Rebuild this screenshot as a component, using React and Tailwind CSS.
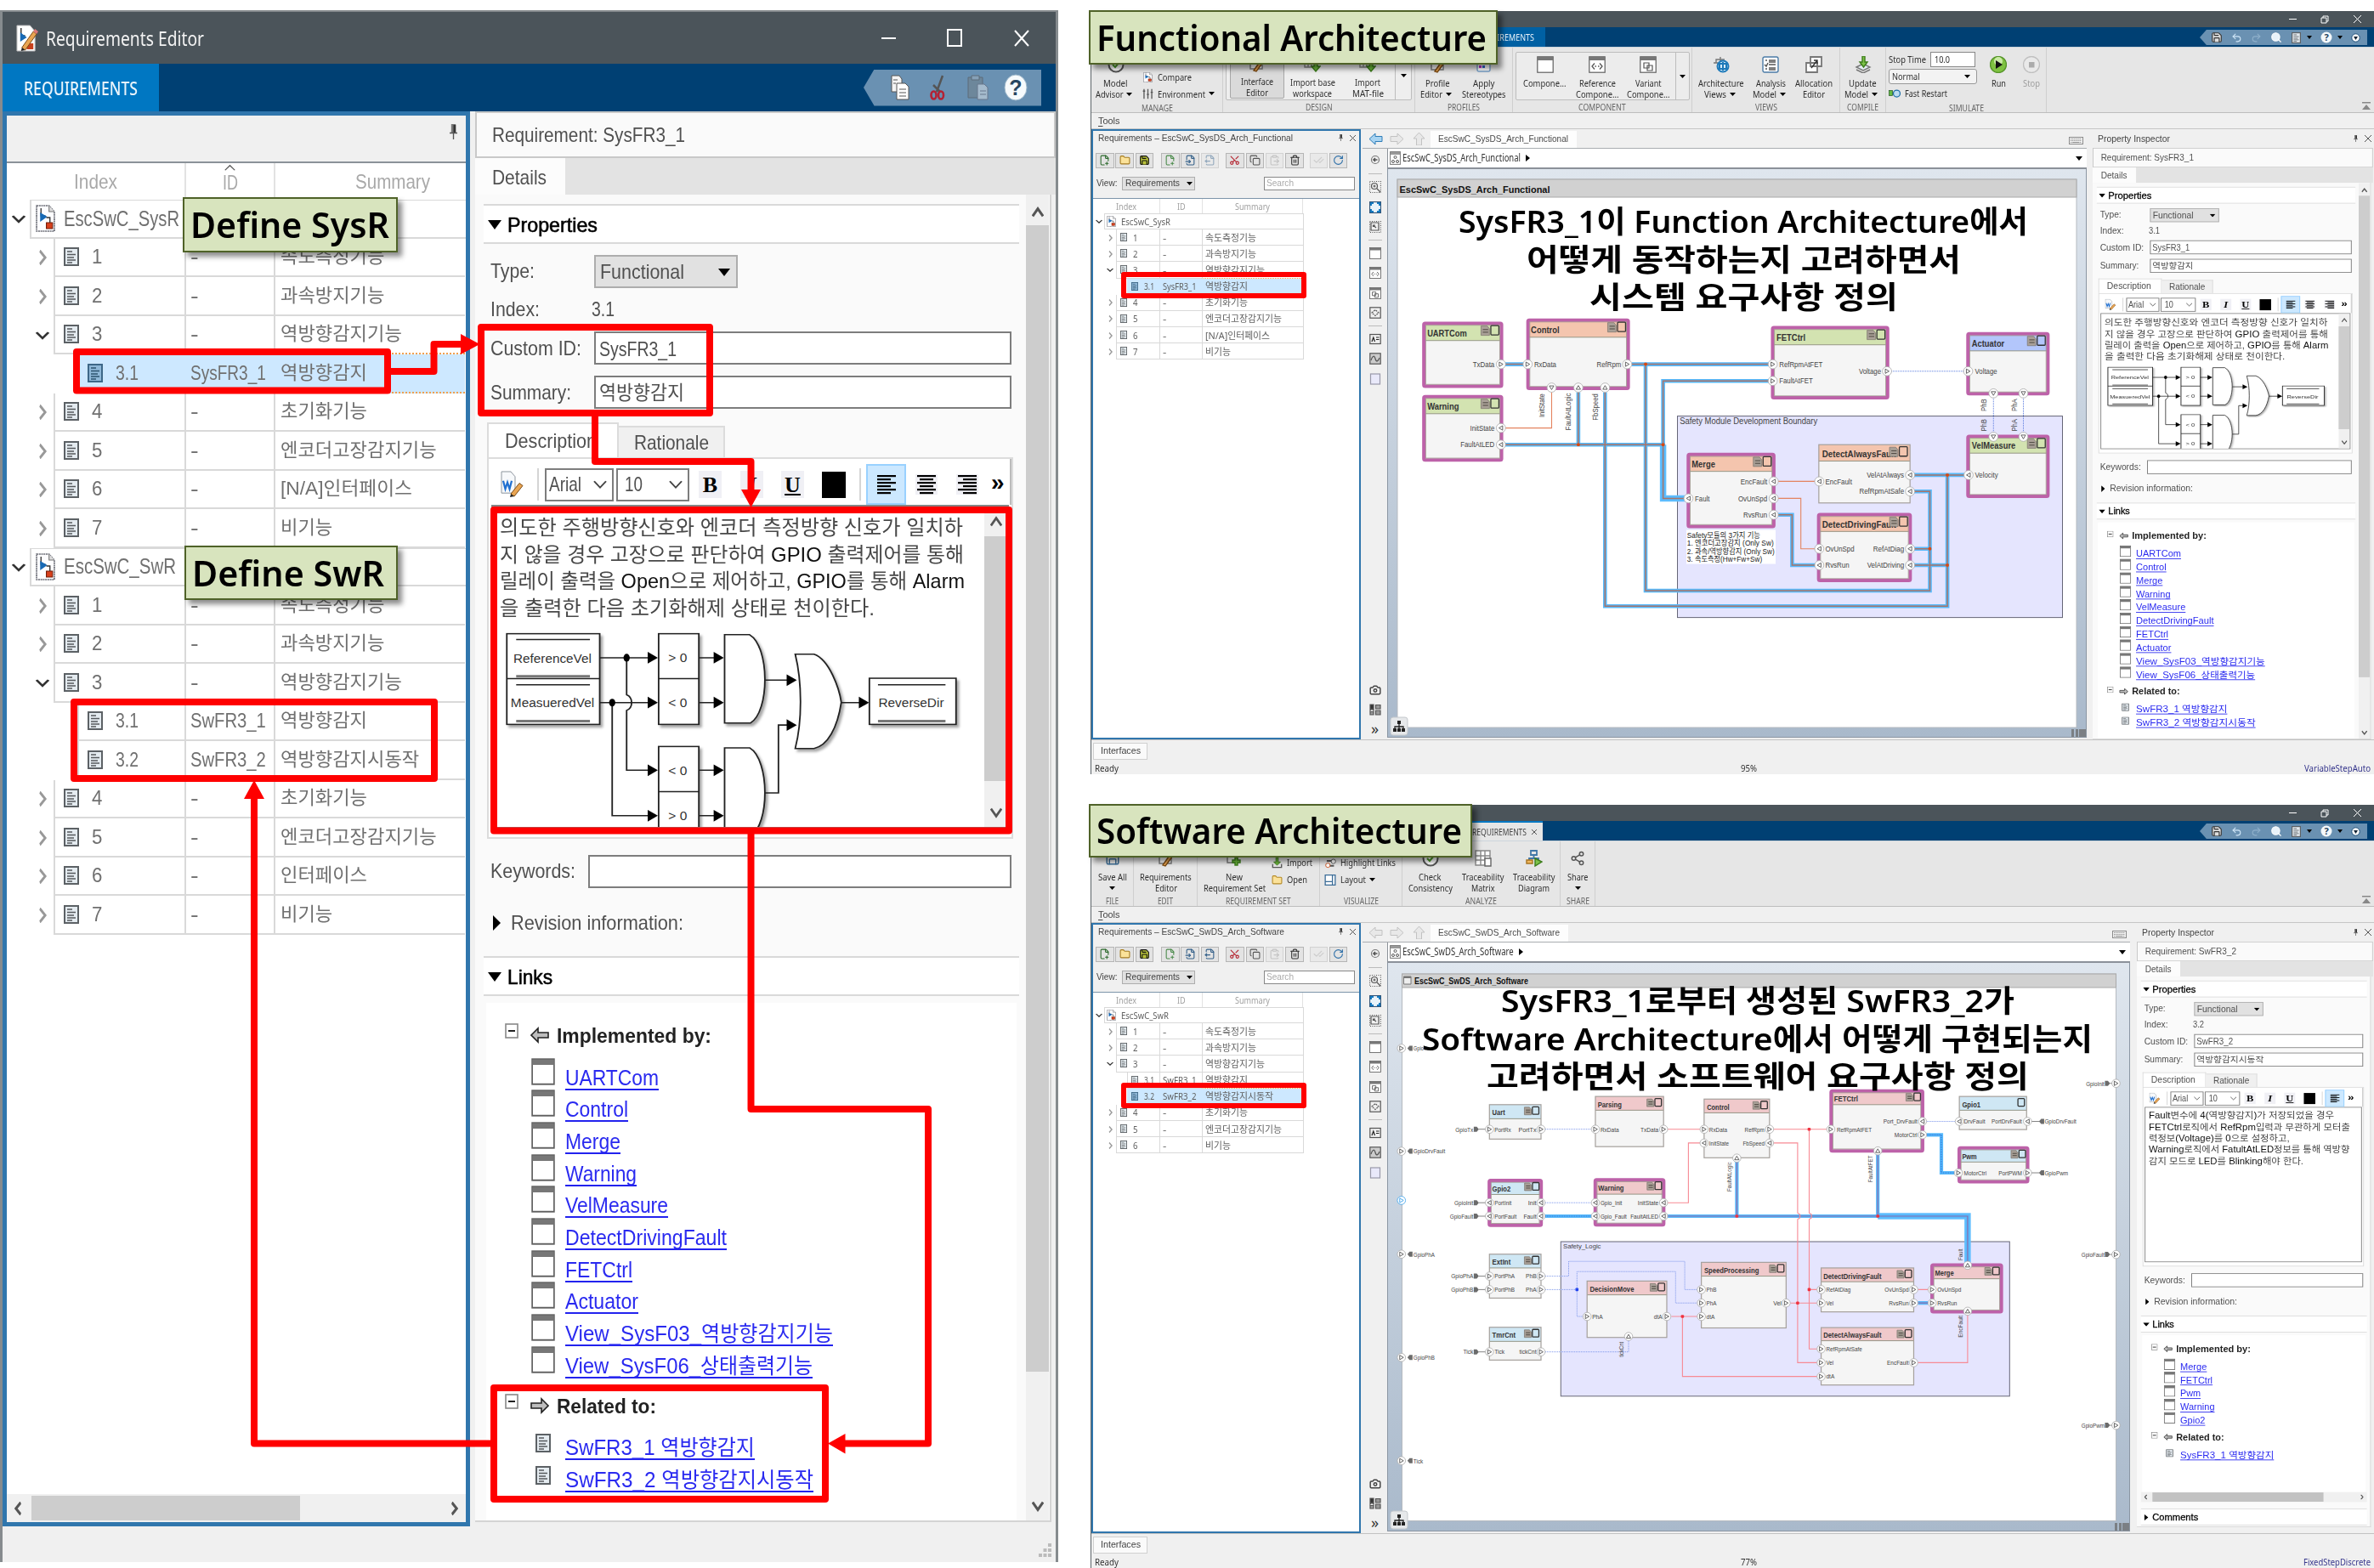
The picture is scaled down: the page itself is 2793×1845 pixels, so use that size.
import React, { useLayoutEffect, useRef, useState } from "react";
import {
  Search, Save, Undo2, Redo2, Scissors, Trash2, RotateCw, Share2, Camera, Copy,
  ClipboardPaste, FilePlus2, Folder, FileInput, FileOutput, CheckCheck,
} from "lucide-react";

const UI = "font-['Liberation_Sans','Noto_Sans_CJK_KR',sans-serif]";
const SEG = "font-['Noto_Sans','Noto_Sans_CJK_KR',sans-serif]";

/* Single line of text, condensed or widened to a given width. */
function T({ w, className = "", children }) {
  const ref = useRef(null);
  const [s, setS] = useState(1);
  useLayoutEffect(() => {
    if (w) setS(w / parseFloat(getComputedStyle(ref.current).width));
  }, [w]);
  return (
    <span className={"inline-block shrink-0 whitespace-pre leading-none " + className} style={{ width: w }}>
      <span ref={ref} className="inline-block origin-left leading-none" style={{ transform: `scaleX(${s})` }}>{children}</span>
    </span>
  );
}

/* ---------- small glyphs ---------- */
const Down = ({ className = "w-[14px] h-[9px]" }) => (
  <svg className={className + " shrink-0"} viewBox="0 0 14 9" preserveAspectRatio="none"><path d="M0 0H14L7 9Z" fill="#000" /></svg>
);
const RightTri = ({ className = "w-[9px] h-[18px]" }) => (
  <svg className={className + " shrink-0"} viewBox="0 0 9 18" preserveAspectRatio="none"><path d="M0 0L9 9L0 18Z" fill="#000" /></svg>
);
const Chev = ({ d = "down", className = "w-[16px] h-[10px]", color = "#555", sw = 2.4 }) => (
  <svg className={className + " shrink-0"} viewBox="0 0 16 16" preserveAspectRatio="none">
    <path d={{ down: "M1 3L8 13L15 3", up: "M1 13L8 3L15 13", right: "M3 1L13 8L3 15", left: "M13 1L3 8L13 15" }[d]} fill="none" stroke={color} strokeWidth={sw} />
  </svg>
);
const DocIcon = ({ className, sel }) => (
  <svg className={className + " shrink-0"} viewBox="0 0 18 22" preserveAspectRatio="none">
    <rect x="1" y="1" width="16" height="20" fill={sel ? "#8fb8d8" : "#e4ebf0"} stroke={sel ? "#3d6787" : "#5c6165"} strokeWidth="2" />
    <path d="M4 5H10M4 8.5H14M4 12H12M4 15H14M4 18H10" stroke={sel ? "#2d536f" : "#55595c"} strokeWidth="1.3" />
  </svg>
);
const SetIcon = ({ className }) => (
  <svg className={className + " shrink-0"} viewBox="0 0 22 32" preserveAspectRatio="none">
    <path d="M1 1H15L21 8V31H1Z" fill="#fdfdff" stroke="#6d6f78" strokeWidth="1.6" strokeDasharray="2 .6" />
    <path d="M15 1V8H21" fill="#ddd" stroke="#777" />
    <path d="M6 4V13H11" stroke="#444" fill="none" strokeWidth="1.4" />
    <path d="M5 9L13 14L5 20Z" fill="#1769b5" />
    <path d="M12 15H16V21" stroke="#333" fill="none" strokeWidth="1.3" />
    <rect x="12" y="21" width="7" height="7" fill="#d8401c" stroke="#701c08" />
  </svg>
);
const Pencil = () => (
  <g><path d="M7 28L21 9L25 12L11 31Z" fill="#e9a552" stroke="#7a4a14" strokeWidth="1" /><path d="M21 9L23 6L27 9L25 12Z" fill="#dd7777" /><path d="M7 28L6 32L11 31Z" fill="#222" /></g>
);
const EditorIcon = () => (
  <svg className="h-[34px] w-[26px] shrink-0" viewBox="0 0 27 34" preserveAspectRatio="none">
    <path d="M1 2H17L23 9V32H1Z" fill="#fff" stroke="#bbb" /><path d="M6 5V14H11" stroke="#333" fill="none" strokeWidth="1.5" />
    <path d="M5 10L13 16L5 21Z" fill="#1769b5" /><rect x="13" y="23" width="8" height="7" fill="#c8401c" /><Pencil />
  </svg>
);
const WordIcon = () => (
  <svg className="h-[32px] w-[27px] shrink-0" viewBox="0 0 27 33" preserveAspectRatio="none">
    <path d="M1 1H12L17 7V27H1Z" fill="#f7f9fb" stroke="#8c949c" />
    <path d="M3 12L5.500 22L8 14L10.500 22L13 12" stroke="#1f6fd0" strokeWidth="2.200" fill="none" />
    <path d="M12 28L22 15L26 18L16 31Z" fill="#e9a552" stroke="#7a4a14" /><path d="M12 28L11 32L16 31Z" fill="#222" />
  </svg>
);
const Pin = ({ className }) => (
  <svg className={className + " shrink-0"} viewBox="0 0 10 18" preserveAspectRatio="none">
    <rect x="2" y="0" width="6" height="10" fill="#777" /><rect x="5" y="1" width="3" height="9" fill="#333" /><path d="M0 10.500H10M5 10V18" stroke="#555" strokeWidth="1.500" />
  </svg>
);
const Box = ({ className = "w-[20px] h-[20px]", kind }) => (
  <svg className={className + " shrink-0"} viewBox="0 0 20 20" preserveAspectRatio="none">
    <rect x=".8" y=".8" width="18.400" height="18.400" fill="#fff" stroke="#5f5f5f" strokeWidth="1.200" />
    <rect x="1" y="1" width="18" height="4" fill="#777" />
    {kind === "ref" && <path d="M7 8.500L4 12L7 15.500M13 8.500L16 12L13 15.500M7.500 12H9M11 12H12.500" fill="none" stroke="#555" strokeWidth="1.300" />}
    {kind === "var" && <path d="M5 8H11V14H5ZM9 11H15V17H9Z" fill="#fff" stroke="#555" strokeWidth="1.200" />}
  </svg>
);
const Align = ({ k }) => {
  const w = [22, 16, 22, 16, 22, 16];
  return (
    <svg className={"h-[24px] w-[26px] shrink-0 " + (k === "l" ? "" : "bg-[#f0f0f5]")} viewBox="0 0 26 24">
      {w.map((n, i) => (
        <rect key={i} y={1 + i * 4} height="2.200" width={n} fill="#000" x={k === "l" ? 2 : k === "r" ? 24 - n : 13 - n / 2} />
      ))}
    </svg>
  );
};
const LinkArrow = ({ flip }) => (
  <svg className={"h-[20px] w-[22px] shrink-0 " + (flip ? "-scale-x-100" : "")} viewBox="0 0 22 20">
    <path d="M1 10L9 2V7H21V13H9V18Z" fill="#bdbdbd" stroke="#222" strokeWidth="1.600" />
  </svg>
);
const Minus = () => (
  <svg className="mb-[10px] h-[18px] w-[16px] shrink-0" viewBox="0 0 16 18"><rect x="1" y="1" width="14" height="16" fill="#fff" stroke="#888" strokeWidth="1.600" /><path d="M4 9H12" stroke="#222" strokeWidth="2" /></svg>
);

/* ---------- logic picture inside the description ---------- */
function GateDiagram() {
  const arrow = (x, y) => <path d={`M${x - 26} ${y - 18}L${x} ${y}L${x - 26} ${y + 18}Z`} fill="#000" />;
  const label = (x, y, w, t, fs = 38) => (
    <text x={x} y={y + 13} textAnchor="middle" textLength={w} lengthAdjust="spacingAndGlyphs" fontSize={fs} fill="#333">{t}</text>
  );
  const shadow = { filter: "drop-shadow(6px 8px 4px rgba(0,0,0,.35))" };
  return (
    <svg className={"mt-[6px] block h-[236px] w-[551px] " + UI} viewBox="110 410 1200 617" preserveAspectRatio="none">
      <g fill="#fff" stroke="#222" strokeWidth="4" style={shadow}>
        <rect x="128" y="430" width="238" height="279" />
        <rect x="517" y="430" width="103" height="279" />
        <rect x="517" y="777" width="103" height="279" />
        <path d="M686 433H750C802 470 802 670 752 705H686Z" />
        <path d="M686 781H750C802 818 802 1018 752 1053H686Z" />
        <path d="M867 493H915C955 510 980 600 985 641C975 720 950 775 915 783H867C885 700 885 580 867 493Z" />
        <rect x="1057" y="567" width="222" height="142" />
      </g>
      <path d="M128 568H366M517 568H620M517 916H620M152 448H341M152 587H341M1079 587H1252" stroke="#222" strokeWidth="4" fill="none" />
      <path d="M152 561H341M152 699H341M1079 699H1252" stroke="#777" strokeWidth="8" />
      <path d="M366 504H500M366 642H500M435 504V618C452 626 452 658 435 666V850H500M398 642V990H500M620 504H665M620 642H665M620 850H665M620 990H665M790 573H850M790 920H824V711H850M985 642H1035" stroke="#222" strokeWidth="4" fill="none" />
      {[[515, 504], [515, 642], [515, 850], [515, 990], [684, 504], [684, 642], [684, 850], [684, 990], [871, 573], [871, 711], [1056, 642]].map((p) => <g key={p.join()}>{arrow(p[0], p[1])}</g>)}
      <ellipse cx="435" cy="504" rx="8" ry="12" /><ellipse cx="398" cy="642" rx="8" ry="12" />
      {label(245, 506, 200, "ReferenceVel")}
      {label(245, 644, 214, "MeasueredVel")}
      {label(1164, 644, 168, "ReverseDir")}
      {label(566, 504, 48, "> 0")}{label(566, 642, 48, "< 0")}{label(566, 852, 48, "< 0")}{label(566, 990, 48, "> 0")}
    </svg>
  );
}

/* ---------- requirement inspector ---------- */
const Section = ({ w, children, open = true }) => (
  <div className="flex h-[47px] items-center border-y-2 border-[#d9d9d9] bg-white pt-[2px] pl-[5px]">
    {open ? <Down className="h-[11px] w-[16px]" /> : <RightTri className="mx-[3px] h-[18px] w-[10px]" />}
    <T w={w} className="ml-[7px] text-[24px] text-black [-webkit-text-stroke:.6px_black]">{children}</T>
  </div>
);
const Field = ({ h, label, lw, children }) => (
  <div className={"flex items-center pr-[9px] pl-[8px] " + h}>
    <div className="flex w-[122px] shrink-0"><T w={lw}>{label}</T></div>
    {children}
  </div>
);
const Input = ({ children }) => <div className="flex h-[39px] flex-1 items-center border-2 border-[#7d7d7d] bg-white pt-[2px] pl-[4px]">{children}</div>;
const Mark = ({ children, bg = true }) => (
  <div className={"flex h-[32px] w-[27px] shrink-0 items-center justify-center text-[26px] font-bold text-black font-['Liberation_Serif',serif] " + (bg ? "bg-[#f0f0f5]" : "")}>{children}</div>
);
const Combo = ({ cls, children }) => (
  <div className={"flex h-[39px] shrink-0 items-center border-2 border-[#7d7d7d] bg-white pr-[6px] " + cls}>
    {children}<span className="flex-1" /><Chev className="h-[12px] w-[16px]" color="#444" sw={2} />
  </div>
);
const K = ({ children }) => <span className="text-[#111]">{children}</span>;

function Links({ title, w, items, doc, flip, top }) {
  return (
    <>
      <div className={"flex h-[38px] items-center pl-[25px] " + top}>
        <Minus /><span className="w-[14px]" /><LinkArrow flip={flip} />
        <T w={w} className="mt-[2px] ml-[9px] text-[24px] font-bold text-[#222]">{title}</T>
      </div>
      <div className="mt-[11px]">
        {items.map(([t, tw]) => (
          <div key={t} className="flex h-[37.66px] items-center pl-[56px]">
            <div className="flex w-[40px] items-center">{doc ? <DocIcon className="mb-[8px] ml-[5px] h-[22px] w-[18px]" /> : <Box className="mb-[12px] h-[32px] w-[28px]" />}</div>
            <T w={tw} className="mt-[5px] border-b-2 border-[#2222ee] text-[25px] text-[#2a2af0]">{t}</T>
          </div>
        ))}
      </div>
    </>
  );
}

function Inspector({ name, nameW, index, idText, idW, sum, sumW, narrow, lines, impl, rel, relFlip }) {
  return (
    <div className={"flex h-full w-full flex-col bg-[#f0f0f0] text-[24px] text-[#505050] " + UI}>
      <div className="flex h-[55px] items-center border-2 border-[#c9c9c9] bg-[#fafafa] pl-[18px]"><T w={nameW}>{name}</T></div>
      <div className="flex h-[43px] bg-[#e3e3e3]">
        <div className="flex w-[106px] items-center bg-[#fcfcfc] pt-[2px] pl-[20px]"><T w={64}>Details</T></div>
      </div>
      <div className="mr-[5px] flex min-h-0 flex-1 overflow-hidden border-r-2 border-b-2 border-[#d4d4d4] bg-[#fafafa]">
        <div className={"flex min-w-0 flex-1 flex-col pt-[11px] pl-[10px] " + (narrow ? "pr-[8px]" : "")}>
          <Section w={106}>Properties</Section>
          <Field h="h-[64px]" label="Type:" lw={52}>
            <div className="flex h-[39px] w-[169px] items-center border-2 border-[#adadad] bg-[#e1e1e1] pt-[2px] pl-[5px]"><T w={99}>Functional</T><span className="w-[40px]" /><Down /></div>
          </Field>
          <Field h="h-[26px]" label="Index:" lw={58}><T w={27} className="-ml-[3px]">{index}</T></Field>
          <Field h="h-[65px]" label="Custom ID:" lw={107}><Input><T w={idW}>{idText}</T></Input></Field>
          <Field h="h-[39px]" label="Summary:" lw={95}><Input><T w={sumW} className="text-[23px]">{sum}</T></Input></Field>
          <div className="mt-[16px] flex h-[41px] items-end pl-[4px]">
            <div className="flex h-[41px] w-[155px] items-center border-2 border-b-0 border-[#dcdcdc] bg-white pl-[19px]"><T w={108}>Description</T></div>
            <div className="flex h-[37px] w-[125px] items-center border-2 border-b-0 border-l-0 border-[#dcdcdc] bg-[#f0f0f0] pl-[18px]"><T w={88}>Rationale</T></div>
          </div>
          <div className="mr-[7px] ml-[4px] overflow-hidden border-2 border-[#dcdcdc] bg-white">
            <div className="flex h-[54px] items-center overflow-hidden border-r-2 border-[#bbb] pt-[6px] pl-[14px]">
              <WordIcon />
              <span className="mr-[7px] ml-[16px] h-[38px] w-[2px] shrink-0 bg-[#d5d5d5]" />
              <Combo cls="w-[81px] pl-[3px]"><T w={38}>Arial</T></Combo>
              <Combo cls="ml-[3px] w-[86px] pl-[8px]"><T w={21}>10</T></Combo>
              <span className="w-[11px] shrink-0" /><Mark>B</Mark>
              <span className="w-[22px] shrink-0" /><Mark><i>I</i></Mark>
              <span className="w-[21px] shrink-0" /><Mark><span className="underline">U</span></Mark>
              <span className="ml-[21px] h-[31px] w-[28px] shrink-0 bg-black" />
              <span className="mr-[6px] ml-[16px] h-[38px] w-[2px] shrink-0 bg-[#d5d5d5]" />
              <span className="flex h-[48px] w-[47px] shrink-0 items-center justify-center border-2 border-[#99d1ff] bg-[#cce8ff]"><Align k="l" /></span>
              {!narrow && <><span className="w-[11px] shrink-0" /><Align k="c" /><span className="w-[22px] shrink-0" /><Align k="r" /></>}
              <span className={"shrink-0 " + (narrow ? "w-[8px]" : "w-[15px]")} /><T className="pb-[4px] text-[28px] font-bold text-black">»</T>
            </div>
            <div className={"mx-[3px] mb-[10px] flex overflow-hidden border-2 border-[#868686] " + (narrow ? "h-[435px]" : "h-[381px]")}>
              <div className={"min-w-0 flex-1 overflow-hidden pl-[8px] " + (narrow ? "pt-[7px]" : "pt-[9px]")}>
                {lines.map(([t, lw], i) => (
                  <div key={i} className="flex h-[31.7px] items-center text-[24px] text-[#484848]"><T w={lw}>{t}</T></div>
                ))}
                {!narrow && <GateDiagram />}
              </div>
              {!narrow && (
                <div className="flex w-[27px] shrink-0 flex-col items-center bg-[#f0f0f0] py-[10px]">
                  <Chev d="up" className="mt-[1px] h-[14px] w-[14px]" sw={3} />
                  <span className="mt-[10px] h-[288px] w-full bg-[#cdcdcd]" />
                  <span className="flex-1" /><Chev className="h-[14px] w-[14px]" sw={3} />
                </div>
              )}
            </div>
          </div>
          <div className="flex h-[76px] shrink-0 items-center pr-[9px] pl-[8px]"><T w={100}>Keywords:</T><span className="w-[15px]" /><Input /></div>
          <div className="mb-[16px] flex h-[46px] shrink-0 items-center pl-[11px]"><RightTri /><T w={203} className="ml-[12px]">Revision information:</T></div>
          <div className="shrink-0"><Section w={53}>Links</Section></div>
          <div className="mx-[3px] mt-[8px] min-h-0 flex-1 bg-white">
            <div className="-ml-[3px]">
              <Links title="Implemented by:" w={182} items={impl} top="pt-0 mt-[19px]" />
              <Links title="Related to:" w={117} items={rel} doc flip={relFlip} top="mt-[10px]" />
            </div>
          </div>
          {narrow && (
            <div className="shrink-0 pb-[3px]">
              <div className="flex h-[28px] items-center justify-between bg-[#f0f0f0] px-[8px]">
                <Chev d="left" className="h-[14px] w-[8px]" sw={4} />
                <span className="mr-auto ml-[12px] h-[26px] w-[418px] bg-[#c2c2c2]" />
                <Chev d="right" className="h-[14px] w-[8px]" sw={4} />
              </div>
              <div className="mt-[18px]"><Section w={112} open={false}>Comments</Section></div>
            </div>
          )}
        </div>
        {!narrow && (
          <div className="mr-[1px] ml-[8px] flex w-[27px] shrink-0 flex-col items-center bg-[#f0f0f0]">
            <Chev d="up" className="mt-[14px] h-[14px] w-[14px]" sw={3.500} />
            <span className="mt-[8px] h-[1349px] w-full bg-[#cdcdcd]" />
            <span className="flex-1" /><Chev className="mb-[10px] h-[14px] w-[14px]" sw={3.500} />
          </div>
        )}
      </div>
    </div>
  );
}

const SYS = {
  name: "Requirement: SysFR3_1", nameW: 227, index: "3.1", idText: "SysFR3_1", idW: 91, sum: "역방향감지", sumW: 100, relFlip: true,
  lines: [
    ["의도한 주행방향신호와 엔코더 측정방향 신호가 일치하", 545],
    [<>지 않을 경우 고장으로 판단하여 <K>GPIO</K> 출력제어를 통해</>, 546],
    [<>릴레이 출력을 <K>Open</K>으로 제어하고, <K>GPIO</K>를 통해 <K>Alarm</K></>, 547],
    ["을 출력한 다음 초기화해제 상태로 천이한다.", 441],
  ],
  impl: [["UARTCom", 110], ["Control", 74], ["Merge", 65], ["Warning", 84], ["VelMeasure", 121], ["DetectDrivingFault", 190], ["FETCtrl", 79], ["Actuator", 86], ["View_SysF03_역방향감지기능", 315], ["View_SysF06_상태출력기능", 291]],
  rel: [["SwFR3_1 역방향감지", 223], ["SwFR3_2 역방향감지시동작", 292]],
};
const SW = {
  name: "Requirement: SwFR3_2", nameW: 223, index: "3.2", idText: "SwFR3_2", idW: 89, sum: "역방향감지시동작", sumW: 164, relFlip: false, narrow: true,
  lines: [
    [<><K>Fault</K>변수에 <K>4(</K>역방향감지<K>)</K>가 저장되었을 경우</>, 453],
    [<><K>FETCtrl</K>로직에서 <K>RefRpm</K>입력과 무관하게 모터출</>, 492],
    [<>력정보<K>(Voltage)</K>를 <K>0</K>으로 설정하고,</>, 344],
    [<><K>Warning</K>로직에서 <K>FatultAtLED</K>정보를 통해 역방향</>, 491],
    [<>감지 모드로 <K>LED</K>를 <K>Blinking</K>해야 한다.</>, 378],
  ],
  impl: [["Merge", 65], ["FETCtrl", 79], ["Pwm", 50], ["Warning", 84], ["Gpio2", 61]],
  rel: [["SysFR3_1 역방향감지", 229]],
};

/* ---------- requirement tree ---------- */
const row = (lv, num, id, sum, n, open, sel) => ({ lv, num, id, sum, n, open, sel });
const common = (tail6) => [row(1, "4", "-", "초기화기능", 5), row(1, "5", "-", "엔코더고장감지기능", 9), ...tail6];
const head3 = [row(1, "1", "-", "속도측정기능", 6), row(1, "2", "-", "과속방지기능", 6), row(1, "3", "-", "역방향감지기능", 7, true)];
const na = row(1, "6", "-", "[N/A]인터페이스", 7.600);
const sysRows = [...head3, row(2, "3.1", "SysFR3_1", "역방향감지", 5, false, true), ...common([na, row(1, "7", "-", "비기능", 3)])];
const swRows = (sel, tail) => [...head3, row(2, "3.1", "SwFR3_1", "역방향감지", 5), row(2, "3.2", "SwFR3_2", "역방향감지시동작", 8, false, sel), ...common(tail)];
const swRowsBig = swRows(false, [row(1, "6", "-", "인터페이스", 5), row(1, "7", "-", "비기능", 3)]);
const swRowsSmall = swRows(true, [row(1, "6", "-", "비기능", 3)]);

const BIG = {
  font: "text-[22px] text-[#707070] " + UI, row: "h-[45.5px]", gut: ["w-[27px]", "w-[55px]", "w-[83px]"], c1: ["w-[182px]", "w-[154px]", "w-[126px]"],
  chev: "w-[27px]", cr: "h-[18px] w-[10px]", cd: "h-[11px] w-[16px]", bw: "border-b-2", bl: "border-l-2", icon: "ml-[10px] h-[22px] w-[18px]",
  num: "ml-[15px] text-[24px]", c2: "w-[105px] pl-[5px]", c3: "w-[225px] pl-[6px]", unit: 20.400, k: 2.250, root: "ml-[5px] h-[32px] w-[23px]", rootT: "ml-[10px] text-[25px]", idc: "text-[24px]",
  selB: "border-b-[2px] border-b-[#f0a050] border-dotted",
};
const SMALL = {
  font: "text-[11px] text-[#606060] " + SEG, row: "h-[19.150px]", gut: ["w-[13px]", "w-[27px]", "w-[40px]"], c1: ["w-[65px]", "w-[51px]", "w-[38px]"],
  chev: "w-[13px]", cr: "h-[8px] w-[5px]", cd: "h-[5px] w-[8px]", bw: "border-b", bl: "border-l", icon: "ml-[4px] h-[10px] w-[8px]",
  num: "ml-[7px]", c2: "w-[50px] pl-[3px]", c3: "w-[119px] pl-[3px]", unit: 10, k: 1, root: "ml-[2px] h-[13px] w-[11px]", rootT: "ml-[6px]", idc: "",
  selB: "border-b border-b-[#f0a050] border-dotted",
};
const LINE = "border-[#d9d9d9]";

function TreeRoot({ c, name, w }) {
  return (
    <div className={"flex " + c.row}>
      <div className={"flex items-center justify-center " + c.gut[0]}><Chev className={c.cd} color="#333" sw={3} /></div>
      <div className={`flex flex-1 items-center border-t ${LINE} ${c.bw} ${c.bl}`}><SetIcon className={c.root} /><T w={w} className={c.rootT}>{name}</T></div>
    </div>
  );
}
function TreeRow({ c, r, beforeSel }) {
  const cell = r.sel ? `border-l-[#cde8ff] bg-[#cde8ff] ${c.selB}` : beforeSel ? `${LINE} ${c.bw}` : `${LINE} ${c.bw}`;
  const last = beforeSel ? `border-l-[#d9d9d9] ${c.selB} [border-left-style:solid]` : cell;
  return (
    <div className={"flex " + c.row}>
      <div className={"flex justify-end " + c.gut[r.lv]}>
        {r.lv === 1 && <div className={"flex items-center justify-center " + c.chev}>{r.open ? <Chev className={c.cd} color="#333" sw={3} /> : <Chev d="right" className={c.cr} color="#999" sw={3.500} />}</div>}
      </div>
      <div className={`flex items-center ${c.bl} ${c.c1[r.lv]} ${cell}`}><DocIcon sel={r.sel} className={c.icon} /><T w={(r.num.length > 1 ? 12 : 5.500) * c.k} className={c.num}>{r.num}</T></div>
      <div className={`flex items-center ${c.bl} ${c.c2} ${cell}`}><T w={r.id === "-" ? 4.300 * c.k : 39.500 * c.k} className={c.idc}>{r.id}</T></div>
      <div className={`flex items-center ${c.bl} ${c.c3} ${last}`}><T w={r.n * c.unit}>{r.sum}</T></div>
    </div>
  );
}
const TreeRows = ({ c, rows }) => rows.map((r, i) => <TreeRow key={i} c={c} r={r} beforeSel={Boolean(rows[i + 1] && rows[i + 1].sel)} />);

/* ---------- requirements editor window ---------- */
function EditorWindow() {
  return (
    <div className="mt-[12px] flex h-[1826px] w-[1245px] shrink-0 flex-col bg-[#868b8e] px-[3px] pt-[2px]">
      <div className={"flex h-[61px] items-center bg-[#4b545a] pl-[16px] " + SEG}>
        <EditorIcon />
        <T w={186} className="ml-[9px] text-[24px] text-[#f2f2f2]">Requirements Editor</T>
        <span className="flex-1" />
        <span className="h-[2px] w-[17px] bg-white" />
        <span className="ml-[60px] h-[21px] w-[18px] border-2 border-white" />
        <svg className="mr-[31px] ml-[61px] h-[20px] w-[18px]" viewBox="0 0 18 20"><path d="M1 1L17 19M17 1L1 19" stroke="#fff" strokeWidth="2" /></svg>
      </div>
      <div className="flex h-[56px] items-center bg-[#004073] pr-[17px]">
        <div className={"flex h-full w-[184px] items-center bg-[#0077c2] pl-[25px] " + SEG}><T w={134} className="text-[22px] font-medium text-[#e8f3fb]">REQUIREMENTS</T></div>
        <span className="flex-1" />
        <div className="flex h-[43px] w-[209px] items-center bg-[#6a91b2] pl-[32px] [clip-path:polygon(6%_0,100%_0,100%_100%,6%_100%,0_50%)]">
          <svg className="h-[30px] w-[22px]" viewBox="0 0 22 30"><path d="M1 1H10L13 5V20H1Z" fill="#f4f4f4" stroke="#555" /><path d="M7 10H17L21 14V29H7Z" fill="#fff" stroke="#555" /><path d="M10 17H18M10 21H18M10 25H18M3 6H8M3 10H6" stroke="#555" /></svg>
          <svg className="ml-[24px] h-[30px] w-[18px]" viewBox="0 0 18 30"><path d="M15 1L8 20M4 12L12 20" stroke="#555" strokeWidth="2.500" /><g fill="none" stroke="#b32234" strokeWidth="2.600"><ellipse cx="4.500" cy="24" rx="3" ry="4.500" /><ellipse cx="13" cy="24" rx="3" ry="4.500" /></g></svg>
          <svg className="ml-[26px] h-[32px] w-[26px] opacity-60" viewBox="0 0 26 32"><path d="M1 4H18V28H1Z" fill="#70808c" stroke="#555" /><path d="M5 2H14V7H5Z" fill="#9ab" stroke="#555" /><path d="M12 12H20L24 16V30H12Z" fill="#cdd7df" stroke="#667" /><path d="M15 20H22M15 24H22" stroke="#667" /></svg>
          <svg className="ml-[17px] h-[32px] w-[28px]" viewBox="0 0 28 32"><ellipse cx="14" cy="16" rx="13" ry="15" fill="#f6fafc" stroke="#9db7ca" /><text x="14" y="25" textAnchor="middle" fontSize="25" fontWeight="bold" fill="#27455f" fontFamily="Liberation Sans">?</text></svg>
        </div>
      </div>
      <div className="flex h-[1665px] bg-[#f0f0f0]">
        <div className={"flex w-[550px] flex-col overflow-hidden border-[5px] border-[#3076ad] bg-white " + UI}>
          <div className="flex h-[56px] shrink-0 justify-end border-b-2 border-[#8b9299] bg-[#f0f0f0] pt-[10px] pr-[10px]"><Pin className="h-[18px] w-[9px]" /></div>
          <div className="flex h-[43px] shrink-0 text-[24px] text-[#a9a9a9]">
            <div className="flex w-[209px] shrink-0 items-center justify-center"><T w={51}>Index</T></div>
            <div className="flex w-[105px] shrink-0 flex-col items-center border-l-2 border-[#e2e2e2]"><Chev d="up" className="mt-[1px] h-[9px] w-[13px]" sw={1.800} /><T w={18} className="mt-[1px]">ID</T></div>
            <div className="flex w-[278px] shrink-0 items-center justify-center border-l-2 border-[#e2e2e2]"><T w={88}>Summary</T></div>
          </div>
          <div className={BIG.font}>
            <TreeRoot c={BIG} name="EscSwC_SysR" w={136} />
            <TreeRows c={BIG} rows={sysRows} />
            <TreeRoot c={BIG} name="EscSwC_SwR" w={132} />
            <TreeRows c={BIG} rows={swRowsBig} />
          </div>
          <div className="mt-auto flex h-[33px] items-center justify-between bg-[#f0f0f0] px-[9px]">
            <Chev d="left" className="h-[16px] w-[9px]" sw={4} /><span className="mr-auto ml-[11px] h-[29px] w-[316px] bg-[#cdcdcd]" /><Chev d="right" className="h-[16px] w-[9px]" sw={4} />
          </div>
        </div>
        <div className="ml-[6px] h-[1660px] w-[683px]"><Inspector {...SYS} /></div>
      </div>
      <div className="flex h-[42px] items-end justify-end bg-[#f0f0f0] pr-[5px] pb-[5px]">
        <svg className="h-[17px] w-[15px]" viewBox="0 0 15 17" fill="#bbb"><path d="M11 0h4v4h-4zM11 6h4v4h-4zM11 12h4v4h-4zM5.500 6h4v4h-4zM5.500 12h4v4h-4zM0 12h4v4h-4z" /></svg>
      </div>
    </div>
  );
}

/* ---------- ribbon ---------- */
const RT = "text-[11.5px] text-[#2e2e2e]";
const Dn = () => <Down className="mx-[4px] h-[4px] w-[7px]" />;
const Group = ({ w, title, tw, children }) => (
  <div className={"flex shrink-0 flex-col border-r border-[#cfcfcf] " + w}>
    <div className="flex h-[64px]">{children}</div>
    <div className="flex h-[13px] items-center justify-center text-[11px] text-[#666]"><T w={tw}>{title}</T></div>
  </div>
);
const Btn = ({ w, icon, a, aw, b, bw, dd, top = "pt-[8px]", cls = "" }) => (
  <div className={`flex shrink-0 flex-col items-center ${w} ${top} ${cls}`}>
    <div className="mb-[3px] flex h-[24px] items-center">{icon}</div>
    <div className={"flex h-[13px] items-center " + RT}><T w={aw}>{a}</T></div>
    <div className={"flex h-[13px] items-center " + RT}>{b && <T w={bw}>{b}</T>}{dd && <Dn />}</div>
  </div>
);
const Line = ({ icon, t, w, dd }) => (
  <div className={"flex h-[20px] items-center gap-[5px] " + RT}><span className="flex w-[14px] shrink-0 justify-center">{icon}</span><span className="flex items-center"><T w={w}>{t}</T>{dd && <Dn />}</span></div>
);
const Svg = ({ children, vb = "0 0 20 20", c = "h-[20px] w-[20px]" }) => <svg className={c + " shrink-0"} viewBox={vb} fill="none" strokeWidth="1.400">{children}</svg>;
const CheckI = () => <Svg><circle cx="10" cy="10" r="8.500" fill="#fff" stroke="#555" strokeWidth="2" /><path d="M6 10L9 13L14 7" stroke="#4c9a2a" strokeWidth="2" /></Svg>;
const GridDown = () => <Svg><path d="M1 2H13V14H1ZM1 6H13M1 10H13M5 2V14M9 2V14" stroke="#888" /><path d="M12 8H16V13H19L14 19L9 13H12Z" fill="#6dbb3c" stroke="#3d7d1c" /></Svg>;
const PencilI = () => <Svg><path d="M2 3H16V16H2Z" fill="#f5f5f5" stroke="#777" /><path d="M6 18L15 5L18 7L9 19Z" fill="#e9a552" stroke="#7a4a14" /></Svg>;
const PlusBox = () => <Svg><path d="M2 3H14V15H2Z" fill="#f5f5f5" stroke="#777" /><path d="M11 9H14V12H17V15H14V18H11V15H8V12H11Z" fill="#6dbb3c" stroke="#3d7d1c" /></Svg>;

const FunctionalRibbon = () => (
  <>
    <Group w="w-[155px]" title="MANAGE" tw={37}>
      <Btn w="w-[57px]" icon={<CheckI />} a="Model" aw={28.600} b="Advisor" bw={32.600} dd />
      <div className="flex flex-col pt-[25px] pl-[2px]">
        <Line icon={<SetIcon className="h-[12px] w-[11px]" />} t="Compare" w={40} />
        <Line icon={<Svg c="h-[13px] w-[13px]"><path d="M3 1V19M10 1V19M17 1V19M1 5H5M8 11H12M15 7H19" stroke="#555" strokeWidth="2" /></Svg>} t="Environment" w={56} dd />
      </div>
    </Group>
    <Group w="w-[226px]" title="DESIGN" tw={31.600}>
      <div className="mt-[4px] ml-[3px] flex h-[58px] w-[219px] rounded-[2px] border border-[#bdbdbd] bg-[#eeeeee]">
        <Btn w="w-[64px]" top="pt-[1px]" cls="ml-[4px] rounded-[2px] border border-[#a8a8a8] bg-[#dadada] h-[55px]" icon={<PencilI />} a="Interface" aw={38} b="Editor" bw={26} />
        <Btn w="w-[66px]" top="pt-[2px]" icon={<GridDown />} a="Import base" aw={53} b="workspace" bw={46} />
        <Btn w="w-[64px]" top="pt-[2px]" icon={<GridDown />} a="Import" aw={30} b="MAT-file" bw={37} />
        <div className="flex flex-1 items-center justify-center border-l border-[#bdbdbd]"><Dn /></div>
      </div>
    </Group>
    <Group w="w-[115px]" title="PROFILES" tw={38}>
      <Btn w="w-[53px]" icon={<PencilI />} a="Profile" aw={28.600} b="Editor" bw={26} dd />
      <Btn w="w-[56px]" icon={<Svg><rect x="2" y="1" width="15" height="17" rx="2" fill="#fff" stroke="#78a0c8" /><g fill="#c33"><rect x="4" y="7" width="3" height="3" /><rect x="8" y="11" width="3" height="3" fill="#36c" /><rect x="12" y="7" width="3" height="3" fill="#93c" /><rect x="8" y="7" width="3" height="3" fill="#e7a" /><rect x="4" y="11" width="3" height="3" fill="#b3c" /></g></Svg>} a="Apply" aw={25.500} b="Stereotypes" bw={51.500} />
    </Group>
    <Group w="w-[211px]" title="COMPONENT" tw={55.600}>
      <div className="mt-[5px] ml-[3px] flex h-[57px] w-[205px] rounded-[2px] border border-[#bdbdbd] bg-[#ececec]">
        <Btn w="w-[67px]" top="pt-[2px]" icon={<Box />} a="Compone..." aw={50.500} />
        <Btn w="w-[56px]" top="pt-[2px]" icon={<Box kind="ref" />} a="Reference" aw={43} b="Compone..." bw={50.500} />
        <Btn w="w-[64px]" top="pt-[2px]" icon={<Box kind="var" />} a="Variant" aw={30.600} b="Compone..." bw={50.500} />
        <div className="flex flex-1 items-center justify-center border-l border-[#bdbdbd]"><Dn /></div>
      </div>
    </Group>
    <Group w="w-[174px]" title="VIEWS" tw={26}>
      <Btn w="w-[68px]" icon={<Svg><path d="M4 8V4H14M9 1V6M1 8H6" stroke="#777" /><circle cx="12" cy="12" r="6.500" fill="#d6ecfa" stroke="#1d79b9" strokeWidth="2" /><path d="M8 9H16V15H8ZM12 7V17" stroke="#1d79b9" strokeWidth="2" /></Svg>} a="Architecture" aw={53.600} b="Views" bw={26} dd />
      <Btn w="w-[48px]" icon={<Svg><rect x="1" y="1" width="18" height="18" rx="2" fill="#fff" stroke="#4b7ba6" /><path d="M4 5H6M8 5H16M8 7H16M3 10L5 12L7 8M8 10H16M4 15H6M8 14H16M8 16H16" stroke="#555" /></Svg>} a="Analysis" aw={35} b="Model" bw={28} dd />
      <Btn w="w-[54px]" icon={<Svg><path d="M6 1H19V12H6ZM1 8H14V19H1Z" fill="#fff" stroke="#777" strokeWidth="1.800" /><path d="M7 14L14 5M10 5H14V9" stroke="#333" /></Svg>} a="Allocation" aw={44} b="Editor" bw={26} />
    </Group>
    <Group w="w-[54px]" title="COMPILE" tw={37}>
      <Btn w="w-[53px]" icon={<Svg><path d="M2 13L10 9L18 13L10 17Z" fill="#e6eef4" stroke="#777" /><path d="M2 16L10 20L18 16" stroke="#777" /><path d="M9 0H12V7H15L10.500 13L6 7H9Z" fill="#7ec24a" stroke="#3d7d1c" /></Svg>} a="Update" aw={32.700} b="Model" bw={28} dd />
    </Group>
    <Group w="w-[189px]" title="SIMULATE" tw={41}>
      <div className="flex w-[107px] flex-col gap-[2px] pt-[5px] pl-[3px]">
        <div className={"flex h-[18px] items-center " + RT}><T w={44}>Stop Time</T><div className="ml-[5px] flex h-[18px] w-[53px] items-center border border-[#888] bg-white pl-[4px]"><T w={18}>10.0</T></div></div>
        <div className={"flex h-[18px] w-[104px] items-center justify-between rounded-[3px] border border-[#999] bg-[#f3f3f3] px-[3px] " + RT}><T w={32.600}>Normal</T><Dn /></div>
        <div className="-mt-[1px]"><Line icon={<Svg c="h-[10px] w-[14px]" vb="0 0 28 20"><rect x="1" y="3" width="8" height="12" fill="#6b4" stroke="#252" /><circle cx="19" cy="10" r="8" fill="#bcdcf2" stroke="#1d6ea8" strokeWidth="2.500" /></Svg>} t="Fast Restart" w={50} /></div>
      </div>
      <Btn w="w-[50px]" icon={<Svg><circle cx="10" cy="10" r="9.500" fill="#7fc241" stroke="#56952a" /><circle cx="10" cy="6" r="5" fill="#c9eaa5" /><path d="M7 5L15 10L7 15Z" fill="#111" /></Svg>} a="Run" aw={17} />
      <div className="opacity-40"><Btn w="w-[28px]" icon={<Svg><circle cx="10" cy="10" r="9.500" fill="#eee" stroke="#888" /><rect x="7" y="7" width="6.500" height="6.500" fill="#555" /></Svg>} a="Stop" aw={20} /></div>
    </Group>
  </>
);
const SoftwareRibbon = () => (
  <>
    <Group w="w-[50px]" title="FILE" tw={15}><Btn w="w-[49px]" icon={<Save className="h-[18px] w-[20px] text-[#3d6e96]" />} a="Save All" aw={34} dd /></Group>
    <Group w="w-[75px]" title="EDIT" tw={18}><Btn w="w-[75px]" icon={<PencilI />} a="Requirements" aw={60.700} b="Editor" bw={26} /></Group>
    <Group w="w-[144px]" title="REQUIREMENT SET" tw={76.500}>
      <Btn w="w-[86px]" icon={<PlusBox />} a="New" aw={20} b="Requirement Set" bw={73} />
      <div className="flex flex-col pt-[15px]">
        <Line icon={<Svg c="h-[13px] w-[13px]"><path d="M8 0H12V8H16L10 14L4 8H8Z" fill="#6dbb3c" stroke="#3d7d1c" /><path d="M2 12V18H18V12" stroke="#555" strokeWidth="2" /></Svg>} t="Import" w={30} />
        <Line icon={<Folder className="h-[13px] w-[13px] fill-[#fbe29a] text-[#b58a25]" />} t="Open" w={24} />
      </div>
    </Group>
    <Group w="w-[97px]" title="VISUALIZE" tw={41}>
      <div className="flex flex-col pt-[15px] pl-[5px]">
        <Line icon={<Svg c="h-[13px] w-[13px]"><path d="M3 6H13M8 15H16" stroke="#555" strokeWidth="3" /><circle cx="15" cy="7" r="4" stroke="#555" fill="#fff" /><circle cx="5" cy="14" r="4" stroke="#c52" fill="#fff" /></Svg>} t="Highlight Links" w={65} />
        <Line icon={<Svg c="h-[13px] w-[14px]"><path d="M1 1H19V19H1ZM14 1V19M1 13H14" fill="#fff" stroke="#3b6c97" strokeWidth="2" /></Svg>} t="Layout" w={30} dd />
      </div>
    </Group>
    <Group w="w-[186px]" title="ANALYZE" tw={37}>
      <Btn w="w-[65px]" icon={<CheckI />} a="Check" aw={26.500} b="Consistency" bw={52} />
      <Btn w="w-[59px]" icon={<Svg><path d="M1 1H18V18H1ZM1 7H18M1 12H18M7 1V18M12 1V18" fill="#fff" stroke="#888" /><path d="M12 10H19V19H12Z" fill="#fff" stroke="#666" /></Svg>} a="Traceability" aw={49.500} b="Matrix" bw={27.500} />
      <Btn w="w-[61px]" icon={<Svg><path d="M6 1H13V6H6ZM9.500 6V10M4 12V10H15V12" stroke="#4077a8" strokeWidth="1.800" /><path d="M1 12H8V16H1Z" fill="#f0b860" stroke="#a87420" /><path d="M11 10L19 14L11 19Z" fill="#7ec24a" stroke="#3d7d1c" /></Svg>} a="Traceability" aw={49.500} b="Diagram" bw={37} />
    </Group>
    <Group w="w-[41px]" title="SHARE" tw={27}><Btn w="w-[40px]" icon={<Share2 className="h-[18px] w-[18px] text-[#555]" />} a="Share" aw={24.500} dd /></Group>
  </>
);

/* ---------- block diagrams ---------- */
const TONE = { green: "#d3e3b1", orange: "#f4c5ae", blue: "#b3c6fb", sky: "#cfe7f4", pink: "#f0c9cb" };
function kit(X, Y, fs) {
  const uy = 1 / (Y(1) - Y(0));
  const ux = 1 / (X(1) - X(0));
  const Txt = ({ x1, x2, y, t, bold, size = fs, fill = "#444" }) => (
    <text x={X(x1)} y={Y(y) + size * 0.350} fontSize={size} fontWeight={bold ? 700 : 400} textLength={(x2 - x1) / ux} lengthAdjust="spacingAndGlyphs" fill={fill}>{t}</text>
  );
  const Vert = ({ x, y1, y2, t }) => (
    <text transform={`translate(${X(x) + fs * 0.350} ${Y((y1 + y2) / 2)}) rotate(-90)`} textAnchor="middle" fontSize={fs} textLength={(y2 - y1) / uy} lengthAdjust="spacingAndGlyphs" fill="#444">{t}</text>
  );
  const Block = ({ b }) => {
    const [t, x1, y1, x2, y2, hy, tone, hl, tx1, tx2, ty, noDoc] = b;
    const l = X(x1) + (hl ? 2 : 0), r = X(x2) - (hl ? 2 : 0), u = Y(y1) + (hl ? 2 : 0), d = Y(y2) - (hl ? 2 : 0);
    const s = fs > 8.800 ? 10.500 : 8.500;
    return (
      <g>
        <rect x={l} y={u} width={r - l} height={d - u} fill="#f5f5f5" rx={hl ? 1.500 : 0} />
        <rect x={l} y={u} width={r - l} height={Y(hy) - u} fill={TONE[tone]} />
        <path d={`M${l} ${Y(hy)}H${r}`} stroke="#8d8d7d" strokeWidth=".9" />
        <rect x={l} y={u} width={r - l} height={d - u} fill="none" stroke={hl ? "#bd62a9" : "#a5a09c"} strokeWidth={hl ? 4 : 1.200} rx={hl ? 1.500 : 0} />
        {hl && <rect x={l + 2.200} y={u + 2.200} width={r - l - 4.400} height={d - u - 4.400} fill="none" stroke="#a09a90" strokeWidth=".8" />}
        <Txt x1={tx1} x2={tx2} y={ty} t={t} bold size={fs + 1.500} fill="#333" />
        {!noDoc && <g><path d={`M${r - 2.300 * s} ${u + 3}h${s * 0.700}l${s * 0.250} ${s * 0.300}v${s * 0.750}h${-s * 0.950}Z`} fill="#a9a097" stroke="#7a736c" strokeWidth=".7" /><path d={`M${r - 2.100 * s} ${u + 3 + s * 0.400}h${s * 0.600}m${-s * 0.600} ${s * 0.300}h${s * 0.600}`} stroke="#4d4741" /></g>}
        <rect x={r - 1.200 * s} y={u + 2.500} width={s * 0.900} height={s * 1.050} fill="none" stroke="#333" strokeWidth="1.300" rx="1" />
      </g>
    );
  };
  const Port = ({ x, y, d, c = "#aaa" }) => (
    <g transform={`translate(${X(x)} ${Y(y)})`}>
      <circle r={fs * 0.600} fill="#fff" stroke={c} strokeWidth=".8" />
      <path d="M-2 -2.600L2.400 0L-2 2.600Z" fill="#fff" stroke={c === "#aaa" ? "#555" : c} strokeWidth=".9" transform={`rotate(${{ r: 0, l: 180, u: -90, d: 90 }[d]})`} />
    </g>
  );
  const path = (pts) => "M" + pts.split(" ").map((p) => { const [a, b] = p.split(",").map(Number); return `${X(a).toFixed(1)} ${Y(b).toFixed(1)}`; }).join("L");
  const Dot = ({ x, y, c }) => <rect x={X(x) - 1.800} y={Y(y) - 1.800} width="3.600" height="3.600" rx="1" fill={c} />;
  const Tag = ({ x, y, flip }) => <path d={flip ? `M${X(x)} ${Y(y)}l2.500 -3h3.500v6h-3.500Z` : `M${X(x)} ${Y(y) - 3}h3.500l2.500 3l-2.500 3h-3.500Z`} fill="#6b6b6b" />;
  return { Txt, Vert, Block, Port, path, Dot, Tag };
}
const CanvasFrame = ({ id, x, y, w, h, page, band, children }) => (
  <svg className={"block " + UI} width={w} height={h} viewBox={`${x} ${y} ${w} ${h}`}>
    <defs><linearGradient id={id} x1="0" y1="0" x2="0" y2="1"><stop offset="0" stopColor="#dfe6ee" /><stop offset="1" stopColor="#a9b9cb" /></linearGradient></defs>
    <rect x={x} y={y} width={w} height={h} fill={`url(#${id})`} />
    <rect x={page[0]} y={page[1]} width={page[2] - page[0]} height={page[3] - page[1]} fill="#fff" stroke="#b5bac0" />
    <rect x={page[0]} y={page[1]} width={page[2] - page[0]} height={band} fill="#d1d1d1" stroke="#a9a9a9" />
    {children}
    <rect x={x + 4} y={y + h - 24} width="20" height="21" rx="3" fill="#e6e8ea" stroke="#c4c8cc" />
    <path d={`M${x + 14} ${y + h - 18}v9M${x + 9} ${y + h - 9}v-4h10v4`} stroke="#222" fill="none" strokeWidth="1.300" />
    <path d={`M${x + 12} ${y + h - 20}h4v4h-4zM${x + 7} ${y + h - 11}h4v4h-4zM${x + 12} ${y + h - 11}h4v4h-4zM${x + 17} ${y + h - 11}h4v4h-4z`} fill="#222" />
    <path d={`M${x + w - 18} ${y + h - 10}h3v9h-3zM${x + w - 13} ${y + h - 10}h3v9h-3zM${x + w - 9} ${y + h - 10}h8v9h-8z`} fill="#7b7f84" />
    <rect x={x + 0.500} y={y - 1} width={w - 1} height={h + 0.500} fill="none" stroke="#8b96a3" />
  </svg>
);

const F = kit((x) => 1600 + x / 1.845, (y) => 350 + y / 2.800, 9);
const fBlocks = [
  ["UARTCom", 135, 80, 311, 298, 142, "green", 1, 146, 232, 119], ["Control", 361, 69, 586, 305, 131, "orange", 1, 371, 433, 107],
  ["Warning", 135, 321, 311, 541, 383, "green", 1, 146, 215, 359], ["FETCtrl", 892, 94, 1149, 336, 156, "green", 1, 904, 967, 133],
  ["Actuator", 1316, 114, 1497, 323, 176, "blue", 1, 1328, 1399, 152], ["VelMeasure", 1316, 452, 1497, 661, 513, "green", 1, 1328, 1423, 489],
  ["Merge", 709, 512, 902, 760, 573, "orange", 1, 720, 771, 550], ["DetectAlwaysFault", 996, 485, 1194, 677, 539, "orange", 0, 1003, 1164, 515],
  ["DetectDrivingFault", 992, 710, 1198, 938, 771, "orange", 1, 1003, 1164, 748],
];
const fPorts = [
  [306, 220, "r", "TxData", 245, 292], [364, 220, "r", "RxData", 378, 426], [580, 220, "r", "RefRpm", 514, 567], [416, 297, "d"], [474, 297, "u"], [532, 297, "u"],
  [306, 430, "l", "InitState", 239, 292], [306, 485, "l", "FaultAtLED", 218, 292], [896, 220, "r", "RefRpmAtFET", 910, 1004], [896, 275, "r", "FaultAtFET", 910, 983],
  [1144, 243, "r", "Voltage", 1083, 1131], [1320, 243, "r", "Voltage", 1335, 1383], [1375, 316, "d"], [1440, 316, "d"], [1375, 459, "d"], [1440, 459, "d"],
  [1321, 585, "l", "Velocity", 1335, 1385], [898, 606, "l", "EncFault", 826, 884], [898, 662, "l", "OvUnSpd", 821, 884], [898, 716, "l", "RvsRun", 832, 884],
  [713, 662, "l", "Fault", 727, 759], [997, 606, "l", "EncFault", 1010, 1068], [1194, 585, "l", "VelAtAlways", 1100, 1181], [1194, 639, "l", "RefRpmAtSafe", 1084, 1181],
  [997, 828, "l", "OvUnSpd", 1010, 1073], [997, 882, "l", "RvsRun", 1010, 1062], [1194, 828, "l", "RefAtDiag", 1114, 1181], [1194, 882, "l", "VelAtDriving", 1101, 1181],
];
const fHot = ["315,220 356,220", "590,220 888,220", "620,220 620,966 1237,966 1237,639 1203,639", "888,275 658,275 658,662 706,662", "315,485 658,485", "474,312 474,485", "532,312 532,1017 1275,1017 1275,585", "1203,585 1312,585", "1203,828 1237,828", "1203,882 1275,882", "908,716 938,716 938,882 988,882"].map(F.path).join("");

function FunctionalCanvas() {
  return (
    <CanvasFrame id="skyA" x={1632} y={199} w={823} h={669} page={[1644, 211, 2443, 856]} band={21}>
      <text x="1646.500" y="226.500" fontSize="11.500" fontWeight="700" textLength="177" lengthAdjust="spacingAndGlyphs" fill="#111">EscSwC_SysDS_Arch_Functional</text>
      <rect x="1973.500" y="489.600" width="453" height="237" fill="#e5e5fe" stroke="#666677" />
      <F.Txt x1={694} x2={993} y={408} t="Safety Module Development Boundary" size={10} />
      <path d={F.path("658,485 658,662 706,662")} stroke="#62bfff" strokeWidth="7.500" fill="none" />
      <path d={fHot} stroke="#57b9fb" strokeWidth="4.600" fill="none" />
      <path d={fHot} stroke="#a97468" strokeWidth="1.500" fill="none" />
      <path d={["416,312 416,430 315,430", "908,606 988,606", "908,662 957,662 957,828 988,828"].map(F.path).join("")} stroke="#e4835f" strokeWidth="1.100" fill="none" />
      <path d={["1153,243 1312,243", "1375,330 1375,450", "1440,330 1440,450"].map(F.path).join("")} stroke="#5577dd" strokeWidth="1" strokeDasharray="1 1" fill="none" />
      {[[620, 220], [474, 485], [658, 485], [1275, 585], [1237, 828], [1275, 882]].map((p) => <F.Dot key={p.join()} x={p[0]} y={p[1]} c="#d9480f" />)}
      {fBlocks.map((b) => <F.Block key={b[0]} b={b} />)}
      {fPorts.map((p, i) => <g key={i}><F.Port x={p[0]} y={p[1]} d={p[2]} />{p[3] && <F.Txt x1={p[4]} x2={p[5]} y={p[1]} t={p[3]} />}</g>)}
      <F.Vert x={394} y1={317} y2={395} t="InitState" /><F.Vert x={452} y1={315} y2={438} t="FaultAtLogic" /><F.Vert x={510} y1={317} y2={405} t="FbSpeed" />
      <F.Vert x={1354} y1={334} y2={375} t="PhB" /><F.Vert x={1420} y1={334} y2={375} t="PhA" /><F.Vert x={1354} y1={401} y2={440} t="PhB" /><F.Vert x={1420} y1={401} y2={440} t="PhA" />
      <rect x="1984" y="623.500" width="105" height="40" fill="#fff" />
      {[["Safety모듈의 3가지 기능", 869, 783], ["1. 엔코더고장감지 (Only Sw)", 898, 809], ["2. 과속/역방향감지 (Only Sw)", 900, 836], ["3. 속도측정(Hw+Fw+Sw)", 873, 862]].map(([t, x2, y]) => <F.Txt key={y} x1={710} x2={x2} y={y} t={t} fill="#222" />)}
    </CanvasFrame>
  );
}

const S = kit((x) => 1600 + x / 1.845, (y) => 1240 + y / 2.592, 8);
const sBlocks = [
  ["Uart", 281, 155, 393, 260, 198, "sky", 0, 287, 315, 178], ["Parsing", 511, 130, 659, 283, 172, "pink", 0, 516, 568, 155], ["Control", 747, 138, 889, 317, 180, "pink", 0, 753, 802, 163],
  ["FETCtrl", 1019, 108, 1225, 301, 155, "pink", 1, 1029, 1081, 137], ["Gpio1", 1301, 130, 1447, 231, 172, "sky", 0, 1307, 1347, 155, 1], ["Pwm", 1297, 282, 1453, 395, 330, "sky", 1, 1307, 1339, 312],
  ["Gpio2", 277, 381, 397, 528, 429, "sky", 1, 287, 327, 410], ["Warning", 507, 379, 663, 527, 428, "pink", 1, 517, 573, 409], ["ExtInt", 281, 611, 393, 745, 653, "sky", 0, 287, 327, 633],
  ["TmrCnt", 281, 834, 393, 934, 877, "sky", 0, 287, 338, 858], ["DecisionMove", 493, 693, 666, 865, 735, "pink", 0, 499, 595, 718], ["SpeedProcessing", 741, 636, 925, 836, 678, "pink", 0, 747, 866, 660],
  ["DetectDrivingFault", 1001, 653, 1202, 787, 695, "pink", 0, 1006, 1132, 677], ["Merge", 1238, 639, 1396, 792, 686, "pink", 1, 1248, 1289, 668], ["DetectAlwaysFault", 1001, 835, 1202, 1010, 875, "pink", 0, 1006, 1132, 858],
];
const sPorts = [
  [281, 230, "r", "PortRx", 292, 328], [393, 230, "r", "PortTx", 344, 383], [511, 230, "r", "RxData", 522, 562], [659, 230, "r", "TxData", 609, 648],
  [747, 230, "r", "RxData", 758, 797], [747, 272, "l", "InitState", 758, 801], [889, 230, "r", "RefRpm", 835, 878], [889, 272, "l", "FbSpeed", 831, 878], [818, 318, "u"],
  [1022, 230, "r", "RefRpmAtFET", 1035, 1111], [1221, 206, "l", "Port_DrvFault", 1136, 1210], [1221, 247, "r", "MotorCtrl", 1160, 1210], [1124, 296, "u"],
  [1301, 206, "l", "DrvFault", 1311, 1357], [1449, 206, "l", "PortDrvFault", 1371, 1437], [1299, 363, "r", "MotorCtrl", 1311, 1360], [1449, 363, "r", "PortPWM", 1386, 1437],
  [281, 454, "l", "PortInit", 292, 329], [393, 454, "l", "Init", 365, 383], [281, 495, "l", "PortFault", 292, 340], [393, 495, "l", "Fault", 355, 383],
  [511, 454, "l", "Gpio_Init", 522, 569], [659, 454, "l", "InitState", 603, 648], [511, 495, "l", "Gpio_Fault", 522, 579], [659, 495, "l", "FaultAtLED", 587, 648],
  [281, 678, "r", "PortPhA", 292, 336], [393, 678, "r", "PhB", 360, 383], [281, 719, "r", "PortPhB", 292, 336], [393, 719, "r", "PhA", 360, 383],
  [281, 909, "r", "Tick", 292, 314], [393, 909, "r", "tickCnt", 346, 383], [493, 801, "r", "PhA", 504, 527], [666, 801, "r", "dtA", 638, 656], [583, 862, "u"],
  [741, 719, "r", "PhB", 752, 774], [741, 760, "r", "PhA", 752, 774], [741, 801, "r", "dtA", 752, 770], [925, 760, "r", "Vel", 897, 915],
  [1001, 719, "r", "RefAtDiag", 1012, 1065], [1001, 760, "r", "Vel", 1012, 1028], [1202, 719, "r", "OvUnSpd", 1139, 1191], [1202, 760, "r", "RvsRun", 1148, 1191],
  [1242, 719, "r", "OvUnSpd", 1253, 1305], [1242, 760, "r", "RvsRun", 1253, 1296], [1319, 645, "u"], [1319, 785, "u"],
  [1001, 900, "r", "RefRpmAtSafe", 1012, 1090], [1001, 942, "r", "Vel", 1012, 1028], [1001, 984, "r", "dtA", 1012, 1030], [1202, 942, "r", "EncFault", 1144, 1191],
];
const sIn = [[230, "GpioTx", 207], [454, "GpioInit", 205], [495, "GpioFault", 195], [678, "GpioPhA", 198], [719, "GpioPhB", 198], [909, "Tick", 224]];
const sLeft = [[-17, "GpioTx", 150], [297, "GpioDrvFault", 185], [611, "GpioPhA", 162], [926, "GpioPhB", 162], [1241, "Tick", 137]];
const sRight = [[90, "GpioInit", 1576], [612, "GpioFault", 1566], [1133, "GpioPwm", 1566]];
const sHot = ["668,495 1124,495 1319,495 1319,637", "818,327 818,495", "1124,305 1124,495", "1211,760 1233,760"].map(S.path).join("");
const sRed = ["668,230 738,230", "898,230 1013,230", "975,230 975,485 980,490 980,500 975,505 975,900 992,900", "975,719 992,719", "898,272 950,272 950,485 955,490 955,500 950,505 950,942 992,942", "934,760 992,760", "738,272 713,272 713,454 668,454", "676,801 732,801", "700,801 700,984 992,984", "1211,719 1233,719", "1211,942 1319,942 1319,795"].map(S.path).join("");
const sDash = ["402,230 502,230", "402,454 502,454", "1230,206 1292,206", "402,678 453,678 453,633 705,633 705,719 732,719", "402,719 471,719 471,664 685,664 685,760 732,760", "471,719 471,801 484,801", "402,909 583,909 583,872"].map(S.path).join("");
const sHotDash = ["1230,247 1262,247 1262,363 1290,363", "402,495 502,495"].map(S.path).join("");

function SoftwareCanvas() {
  return (
    <CanvasFrame id="skyB" x={1632} y={1133} w={874} h={669} page={[1649.500, 1146, 2489.500, 1789.500]} band={16}>
      <path d="M1651.500 1149h8.500v9h-8.500z" fill="#eee" stroke="#777" /><path d="M1651.500 1150h8.500" stroke="#777" strokeWidth="2" />
      <text x="1664" y="1157.500" fontSize="10" fontWeight="700" textLength="134" lengthAdjust="spacingAndGlyphs" fill="#111">EscSwC_SwDS_Arch_Software</text>
      <rect x="1836.300" y="1461" width="528" height="181.800" fill="#e5e5fe" stroke="#666677" />
      <S.Txt x1={441} x2={523} y={587} t="Safety_Logic" />
      <path d={S.path("1124,495 1319,495 1319,637")} stroke="#62bfff" strokeWidth="7.500" fill="none" />
      <path d={sHot + sHotDash} stroke="#57b9fb" strokeWidth="4.200" fill="none" />
      <path d={sHot} stroke="#8a6fae" strokeWidth="1.200" fill="none" />
      <path d={sRed} stroke="#f78a94" strokeWidth="1.100" fill="none" />
      <path d={sDash} stroke="#7a94ea" strokeWidth="1" strokeDasharray="1 1" fill="none" />
      <path d={sHotDash} stroke="#2f6fd8" strokeWidth="1.200" strokeDasharray="1 1" fill="none" />
      {[[818, 495], [1124, 495], [975, 230], [975, 719], [950, 760], [700, 801]].map((p) => <S.Dot key={p.join()} x={p[0]} y={p[1]} c="#ef3340" />)}
      <S.Dot x={471} y={719} c="#2244ee" />
      {sBlocks.map((b) => <S.Block key={b[0]} b={b} />)}
      {sIn.map(([y, t, x]) => <g key={t}><S.Txt x1={x} x2={246} y={y} t={t} /><S.Tag x={247} y={y} /><path d={S.path(`258,${y} 275,${y}`)} stroke="#777" strokeWidth=".9" /></g>)}
      {[[206, "GpioDrvFault", 1555], [363, "GpioPwm", 1537]].map(([y, t, x2]) => <g key={t}><path d={S.path(`1457,${y} 1475,${y}`)} stroke="#777" strokeWidth=".9" /><S.Tag x={1474} y={y} flip /><S.Txt x1={1486} x2={x2} y={y} t={t} /></g>)}
      {sLeft.map(([y, t, x2]) => <g key={t + y}><S.Port x={90} y={y} d="r" /><S.Tag x={103} y={y} flip /><S.Txt x1={116} x2={x2} y={y} t={t} /></g>)}
      {sRight.map(([y, t, x]) => <g key={t + y}><S.Txt x1={x} x2={1616} y={y} t={t} /><S.Tag x={1617} y={y} /><path d={S.path(`1628,${y} 1633,${y}`)} stroke="#777" strokeWidth=".9" /><S.Port x={1641} y={y} d="r" /></g>)}
      <S.Port x={90} y={447} d="r" c="#3ea2ea" />
      {sPorts.map((p, i) => <g key={i}><S.Port x={p[0]} y={p[1]} d={p[2]} />{p[3] && <S.Txt x1={p[4]} x2={p[5]} y={p[1]} t={p[3]} />}</g>)}
      <S.Vert x={802} y1={330} y2={420} t="FaultAtLogic" /><S.Vert x={1108} y1={310} y2={392} t="FaultAtFET" /><S.Vert x={566} y1={878} y2={925} t="tickCnt" />
      <S.Vert x={1303} y1={595} y2={630} t="Fault" /><S.Vert x={1303} y1={798} y2={865} t="EncFault" />
    </CanvasFrame>
  );
}

/* ---------- modelling tool windows ---------- */
const Tool = ({ children }) => <div className="flex h-[23.400px] shrink-0 items-center justify-center">{children}</div>;
const Rule = () => <div className="flex h-[7.500px] shrink-0 items-center justify-center"><span className="h-px w-[16px] bg-[#bbb]" /></div>;
const Pic = ({ children }) => <svg className="h-[14px] w-[14px]" viewBox="0 0 14 14" fill="none" stroke="#555" strokeWidth="1.200">{children}</svg>;
const KeyboardIcon = () => (
  <svg className="mt-[4px] mr-[4px] ml-auto h-[9px] w-[17px]" viewBox="0 0 17 9" fill="none" stroke="#8a8a8a">
    <rect x=".5" y=".5" width="16" height="8" fill="#f4f4f4" /><path d="M2 2.500H15M2 4.500H15M2 6.500H15" strokeDasharray="1.300 .8" /><path d="M5 6.500H12" />
  </svg>
);
const SideTools = () => (
  <div className="flex w-[29px] shrink-0 flex-col">
    <div className="flex h-[26px] shrink-0 items-center justify-center"><Pic><circle cx="7" cy="7" r="4.500" stroke="#777" /><path d="M9.500 7H5M7 5L5 7L7 9" strokeWidth="1.600" /></Pic></div>
    <Rule />
    <Tool><Pic><path d="M.5 .5H13.500V13.500H.5Z" strokeDasharray="1 1.500" /><circle cx="6" cy="6" r="3.500" /><path d="M9 9L13 13M4.500 6H7.500M6 4.500V7.500" /></Pic></Tool>
    <Tool><Pic><rect x=".5" y=".5" width="13" height="13" fill="#e8f3fa" stroke="#357" /><path d="M2 5V2H5M9 2H12V5M12 9V12H9M5 12H2V9" stroke="#1379c0" strokeWidth="2" /></Pic></Tool>
    <Tool><Pic><path d="M.5 .5H13.500V13.500H.5Z" strokeDasharray="1 1.500" /><path d="M2 2H11V11H2Z" /><path d="M8 8L4.500 5M4.500 7V5H7" /></Pic></Tool>
    <Rule />
    <Tool><Box className="h-[14px] w-[14px]" /></Tool><Tool><Box kind="ref" className="h-[14px] w-[14px]" /></Tool><Tool><Box kind="var" className="h-[14px] w-[14px]" /></Tool>
    <Tool><Pic><rect x=".8" y=".8" width="12.400" height="12.400" /><path d="M3 7L7 3.500L11 7L7 10.500Z" strokeDasharray="2 1" /></Pic></Tool>
    <Rule />
    <Tool><Pic><rect x=".8" y="1.500" width="12.400" height="11" /><path d="M3 10L4.800 5L6.500 10M8 5H11.500M8 7.500H11.500" stroke="#222" /></Pic></Tool>
    <Tool><Pic><rect x=".8" y=".8" width="12.400" height="12.400" fill="#ccc" /><path d="M2 9C4 3 6 3 7 7S10 11 12 6" /></Pic></Tool>
    <Tool><Pic><rect x="1.500" y="1" width="11" height="12" fill="#e9e9fa" stroke="#99a" /></Pic></Tool>
    <span className="flex-1" />
    <Tool><Camera className="h-[14px] w-[14px] text-[#444]" strokeWidth={2.500} /></Tool>
    <Tool><Pic><path d="M1 1H5V8L3 6L1 8Z" fill="#333" /><path d="M7.500 1.500H13V6H7.500ZM7.500 8H13V13H7.500ZM1 9.500H5V13H1Z" fill="#999" /></Pic></Tool>
    <Tool><T className="pb-[3px] text-[18px] text-[#333]">»</T></Tool>
  </div>
);
const TB = ({ dim, children }) => <span className={"flex h-[18px] w-[21.500px] shrink-0 items-center justify-center border border-[#b5b5b5] bg-[#e3e3e3] " + (dim ? "opacity-50" : "")}>{children}</span>;
const ic = "h-[13px] w-[13px]";
const NavArrow = ({ d, on }) => (
  <svg className="h-[15px] w-[17px] shrink-0" viewBox="0 0 17 15"><path d="M1 7.500L8 1V4.500H16V10.500H8V14Z" fill={on ? "#a8d4f2" : "#e8e8e8"} stroke={on ? "#2f7db8" : "#c2c2c2"} transform={`rotate(${{ l: 0, u: 90, r: 180 }[d]} 8.500 7.500)`} /></svg>
);

function ModelWindow({ ribbon, tab, title, titleW, treeName, treeW, rows, model, modelW, crumbW, tabW, centerW, canvas, insBox, inner, ins, zoom, solver, solverW, dimIndent, backOn, gap }) {
  return (
    <div className={"flex h-[898px] w-[1510px] shrink-0 flex-col overflow-hidden border-l border-[#5b6368] bg-[#f0f0f0] " + SEG}>
      <div className="flex h-[19px] shrink-0 items-center justify-end bg-[#4b545a] pr-[15px]">
        <span className="h-px w-[9px] bg-white" />
        <svg className="ml-[28px] h-[10px] w-[10px]" viewBox="0 0 10 10" fill="none" stroke="#fff"><path d="M1 3H7V9H1ZM3 3V1H9V7H7" /></svg>
        <svg className="ml-[29px] h-[9px] w-[9px]" viewBox="0 0 9 9"><path d="M0 0L9 9M9 0L0 9" stroke="#fff" /></svg>
      </div>
      <div className="flex h-[23px] shrink-0 bg-[#004073] pr-[8px]">
        {tab}
        <span className="flex-1" />
        <div className="mt-[3px] flex h-[18px] w-[197px] items-center justify-between bg-[#6a91b2] pr-[8px] pl-[13px] text-white [clip-path:polygon(4%_0,100%_0,100%_100%,4%_100%,0_50%)]">
          <Save className="h-[14px] w-[14px] fill-[#ddd] text-[#333]" /><Undo2 className="h-[13px] w-[13px] text-[#cfe6f8]" /><Redo2 className="h-[13px] w-[13px] text-[#8fb0cb]" /><Search className="h-[14px] w-[14px] fill-[#e8f2fa] text-white" />
          <span className="flex items-center"><DocIcon className="h-[13px] w-[11px]" /><Down className="ml-[7px] h-[4px] w-[6px]" /></span>
          <span className="flex items-center"><svg className="h-[14px] w-[14px]" viewBox="0 0 14 14"><circle cx="7" cy="7" r="6.500" fill="#f4f8fb" /><text x="7" y="11" textAnchor="middle" fontSize="11" fontWeight="bold" fill="#27455f">?</text></svg><Down className="ml-[6px] h-[4px] w-[6px]" /></span>
          <svg className="h-[11px] w-[11px]" viewBox="0 0 11 11"><circle cx="5.500" cy="5.500" r="4.700" fill="#fff" stroke="#1d4e78" /><path d="M3 4H8L5.500 8Z" fill="#123" /></svg>
        </div>
      </div>
      <div className="flex h-[78px] shrink-0 border-t border-b border-t-[#cdd5dc] border-b-[#bdbdbd] bg-[#e6e6e6]">
        {ribbon}
        <svg className="mt-auto mr-[4px] mb-[2px] ml-auto h-[10px] w-[10px]" viewBox="0 0 10 10" fill="#888"><path d="M0 0H10V1.500H0ZM5 3L10 9H0Z" /></svg>
      </div>
      <div className={"flex h-[19px] shrink-0 items-center border-b border-[#c6c6c6] pl-[8px] text-[11px] text-[#444] " + UI}><T w={25.500}><span className="underline underline-offset-2">T</span>ools</T></div>
      <div className="flex h-[718px] shrink-0">
        <div className="flex w-[317px] shrink-0 flex-col border-2 border-[#3076ad] bg-[#f0f0f0]">
          <div className={"flex h-[16px] items-center pr-[4px] pl-[6px] text-[11px] text-[#444] " + UI}><T w={titleW}>{title}</T><span className="flex-1" /><Pin className="h-[8px] w-[5px]" /><svg className="ml-[8px] h-[7px] w-[7px]" viewBox="0 0 7 7"><path d="M0 0L7 7M7 0L0 7" stroke="#555" /></svg></div>
          <div className="flex h-[37px] items-center gap-[1.900px] pl-[3px]">
            <TB><FilePlus2 className={ic + " text-[#2d6a2d]"} /></TB><TB><Folder className={ic + " fill-[#fbe29a] text-[#a57b1c]"} /></TB><TB><Save className={ic + " fill-[#b9c23a] text-[#111]"} /></TB>
            <span className="w-[5px]" /><TB><FilePlus2 className={ic + " text-[#4a8a4a]"} /></TB><TB><FileInput className={ic + " text-[#35618a]"} /></TB><TB dim={dimIndent}><FileOutput className={ic + " text-[#35618a]"} /></TB>
            <span className="w-[4px]" /><TB><Scissors className={ic + " -rotate-90 text-[#b3202c]"} /></TB><TB><Copy className={ic + " text-[#555]"} /></TB><TB dim><ClipboardPaste className={ic + " text-[#999]"} /></TB><TB><Trash2 className={ic + " text-[#333]"} /></TB>
            <span className="w-[3px]" /><TB dim><CheckCheck className={ic + " text-[#aaa]"} /></TB><TB><RotateCw className={ic + " text-[#2d6fa8]"} /></TB>
          </div>
          <div className={"flex h-[17px] items-center pl-[4px] text-[11px] text-[#444] " + UI}>
            <T w={24.500}>View:</T><div className="ml-[5px] flex h-[16px] w-[86px] items-center border border-[#adadad] bg-[#e1e1e1] pl-[3px]"><T w={64}>Requirements</T><Down className="ml-[8px] h-[4px] w-[7px]" /></div>
            <div className="ml-[81px] flex h-[16px] w-[107px] items-center border border-[#888] bg-white pl-[2px] text-[#aaa]"><T w={32}>Search</T></div>
          </div>
          <div className="mt-[9px] flex flex-1 flex-col border-t border-[#7d95aa] bg-white">
            <div className="flex h-[17px] text-[11px] text-[#a0a0a0]">
              <div className="flex w-[78px] items-center justify-center"><T w={24}>Index</T></div>
              <div className="flex w-[50px] items-center justify-center border-l border-[#e2e2e2]"><T w={9.700}>ID</T></div>
              <div className="flex w-[119px] items-center justify-center border-x border-[#e2e2e2]"><T w={41}>Summary</T></div>
            </div>
            <div className={"w-[247.500px] border-r border-[#d9d9d9] " + SMALL.font}>
              <TreeRoot c={SMALL} name={treeName} w={treeW} />
              <TreeRows c={SMALL} rows={rows} />
            </div>
          </div>
        </div>
        <div className={"ml-[2px] flex shrink-0 flex-col " + centerW}>
          <div className={"flex h-[22px] shrink-0 items-center pl-[7px] " + UI}>
            <NavArrow d="l" on={backOn} /><span className="w-[8px]" /><NavArrow d="r" /><span className="w-[9px]" /><NavArrow d="u" />
            <div className={"mt-[2px] ml-[5px] flex h-[20px] items-center bg-[#fdfdfd] pl-[9px] text-[11.500px] text-[#4a4a4a] " + tabW}><T w={modelW}>{model}</T></div>
            <KeyboardIcon />
          </div>
          <div className="flex flex-1 border-t border-[#a9adb1]">
            <SideTools />
            <div className="flex flex-col">
              <div className="flex h-[24px] items-center border-b-2 border-l border-[#8b9199] bg-white pr-[5px] pl-[2px] text-[12px] text-[#333]">
                <svg className="h-[16px] w-[13px]" viewBox="0 0 13 16"><rect x=".6" y=".6" width="11.800" height="14.800" fill="#fff" stroke="#777" /><path d="M1 1H12V4H1Z" fill="#999" /><circle cx="6.500" cy="7" r="1.500" fill="none" stroke="#555" /><circle cx="4" cy="12" r="1.500" fill="none" stroke="#555" /><circle cx="9" cy="12" r="1.500" fill="none" stroke="#555" /></svg>
                <T w={crumbW} className="ml-[2px]">{model}</T><RightTri className="ml-[6px] h-[8px] w-[5px]" /><Down className="ml-auto h-[5px] w-[8px]" />
              </div>
              {canvas}
            </div>
          </div>
        </div>
        <div className={"flex flex-col " + gap}>
          <div className={"flex h-[22px] shrink-0 items-center pr-[2px] pl-[6px] text-[11px] text-[#444] " + UI}><T w={85}>Property Inspector</T><span className="flex-1" /><Pin className="h-[8px] w-[5px]" /><svg className="ml-[8px] h-[8px] w-[8px]" viewBox="0 0 8 8"><path d="M0 0L8 8M8 0L0 8" stroke="#555" /></svg></div>
          <div className={"h-[696px] overflow-hidden " + insBox}><div className={"origin-top-left scale-x-[0.4815] scale-y-[0.42] " + inner}><Inspector {...ins} /></div></div>
        </div>
      </div>
      <div className={"flex h-[26px] items-center border-t border-[#c2c2c2] pl-[2px] text-[11px] text-[#444] " + UI}><div className="flex h-[20px] w-[64px] items-center justify-center border border-[#d0d0d0] bg-[#fafafa]"><T w={47}>Interfaces</T></div></div>
      <div className="flex h-[15px] items-center pr-[4px] pl-[4px] text-[11px] text-[#333]"><T w={28}>Ready</T><span className="w-[732px]" /><T w={19}>{zoom}</T><span className="flex-1" /><T w={solverW} className="text-[#35358c]">{solver}</T></div>
    </div>
  );
}

/* ---------- annotations ---------- */
const Label = ({ pos, w, children }) => (
  <div className={`absolute flex items-center border-2 border-[#4f6228] bg-[#d8e4be] pl-[7px] text-[42px] font-semibold text-black shadow-[5px_5px_6px_rgba(0,0,0,.45)] ${SEG} ${pos}`}><T w={w} className="pb-[1px]">{children}</T></div>
);
const Headline = ({ pos, lines }) => (
  <div className={`absolute flex flex-col items-center text-[36px] font-semibold text-black ${SEG} ${pos}`}>
    {lines.map(([t, w]) => <div key={t} className="flex h-[44.500px] items-center"><T w={w}>{t}</T></div>)}
  </div>
);
const Annotations = () => (
  <>
    <svg className="absolute inset-0 h-[1845px] w-[2793px]" viewBox="0 0 2793 1845" fill="none" stroke="#f00" strokeWidth="8" strokeLinejoin="round">
      <rect x="90" y="414" width="366" height="45.500" /><rect x="566" y="385" width="269" height="101" />
      <rect x="581" y="600" width="606" height="377.500" /><rect x="581" y="1633" width="390" height="131" /><rect x="87" y="826" width="424" height="90" />
      <path d="M460 437H510.500V405H545M700 490V543H883.500V578M883.500 981V1305H1092V1698.500H992M577 1698.500H299V938" />
      <path d="M542 393L564.500 405L542 417ZM872 576H895L883.500 597ZM994.500 1687V1710.500L974 1698.500ZM287 940H311L299 918Z" fill="#f00" stroke="none" />
      <g strokeWidth="6"><rect x="1322" y="323" width="212" height="25" /><rect x="1322" y="1277" width="212" height="24" /></g>
    </svg>
    <Label pos="left-[215px] top-[232px] h-[65px] w-[253px]" w={234}>Define SysR</Label>
    <Label pos="left-[217px] top-[642px] h-[64px] w-[251px]" w={226}>Define SwR</Label>
    <Label pos="left-[1281px] top-[12px] h-[64px] w-[481px]" w={459}>Functional Architecture</Label>
    <Label pos="left-[1281px] top-[946px] h-[63px] w-[451px]" w={430}>Software Architecture</Label>
    <Headline pos="left-[1717px] top-[239px] w-[668px]" lines={[["SysFR3_1이 Function Architecture에서", 670], ["어떻게 동작하는지 고려하면서", 511], ["시스템 요구사항 정의", 363]]} />
    <Headline pos="left-[1674px] top-[1156px] w-[787px]" lines={[["SysFR3_1로부터 생성된 SwFR3_2가", 604], ["Software Architecture에서 어떻게 구현되는지", 789], ["고려하면서 소프트웨어 요구사항 정의", 638]]} />
  </>
);

export default function App() {
  return (
    <div className="relative flex h-[1845px] w-[2793px] items-start overflow-hidden bg-white">
      <EditorWindow />
      <div className="mt-[13px] ml-[38px] flex flex-col gap-[36px]">
        <ModelWindow
          ribbon={<FunctionalRibbon />}
          tab={<div className="ml-[437px] flex w-[97px] items-center justify-end bg-[#0060a3] pr-[13px] text-[11px] text-[#e6f1f9]"><T w={68}>REQUIREMENTS</T></div>}
          title="Requirements – EscSwC_SysDS_Arch_Functional" titleW={229} treeName="EscSwC_SysR" treeW={58} rows={sysRows}
          model="EscSwC_SysDS_Arch_Functional" modelW={153} crumbW={139} tabW="w-[172px]" centerW="w-[852px]" canvas={<FunctionalCanvas />}
          gap="ml-[7px]" insBox="w-[330px]" inner="h-[1657px] w-[685px]" ins={SYS} zoom="95%" solver="VariableStepAuto" solverW={78} dimIndent backOn
        />
        <ModelWindow
          ribbon={<SoftwareRibbon />}
          tab={<div className="ml-[437px] flex w-[94px] items-center justify-end border-t-2 border-[#0077c2] bg-[#e6e6e6] pr-[7px] text-[11px] text-[#444]"><T w={64}>REQUIREMENTS</T><svg className="ml-[6px] h-[6px] w-[6px]" viewBox="0 0 6 6"><path d="M0 0L6 6M6 0L0 6" stroke="#555" /></svg></div>}
          title="Requirements – EscSwC_SwDS_Arch_Software" titleW={219} treeName="EscSwC_SwR" treeW={56} rows={swRowsSmall}
          model="EscSwC_SwDS_Arch_Software" modelW={143} crumbW={130.600} tabW="w-[162px]" centerW="w-[903px]" canvas={<SoftwareCanvas />}
          gap="ml-[8px]" insBox="w-[278px]" inner="h-[1640px] w-[577px]" ins={SW} zoom="77%" solver="FixedStepDiscrete" solverW={79}
        />
      </div>
      <Annotations />
    </div>
  );
}
